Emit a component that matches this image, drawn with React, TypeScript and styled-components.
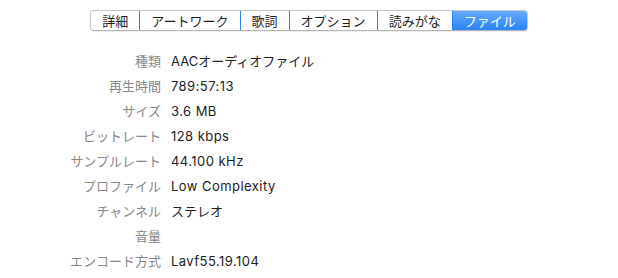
import React from 'react';
import styled, { createGlobalStyle } from 'styled-components';

const GlobalStyle = createGlobalStyle`
  html, body {
    margin: 0;
    padding: 0;
    background: #ffffff;
  }
  body {
    font-family: Inter, "Noto Sans CJK JP", sans-serif;
    -webkit-font-smoothing: antialiased;
  }
`;

const Page = styled.div`
  width: 618px;
  height: 278px;
  padding-top: 10px;
  box-sizing: border-box;
`;

const TabBar = styled.div`
  display: flex;
  justify-content: center;
`;

const Segments = styled.div`
  display: flex;
  height: 21px;
  box-sizing: border-box;
  border: 1px solid #c6c6c6;
  border-bottom-color: #b4b4b4;
  border-radius: 4px;
  background: #ffffff;
  box-shadow: 0 0.5px 1px rgba(0, 0, 0, 0.08);
  overflow: hidden;
`;

const Segment = styled.div<{ $active?: boolean }>`
  display: flex;
  align-items: center;
  justify-content: center;
  padding: 0 11px;
  font-family: "Noto Sans CJK JP", sans-serif;
  font-size: 13px;
  line-height: 1;
  color: ${(p) => (p.$active ? '#ffffff' : '#1e1e1e')};
  background: ${(p) =>
    p.$active ? 'linear-gradient(#63aafc, #2a82f6)' : 'transparent'};
  & + & {
    border-left: 1px solid ${(p) => (p.$active ? '#2a82f6' : '#d6d6d6')};
  }
`;

const InfoGrid = styled.div`
  display: grid;
  grid-template-columns: 161px auto;
  column-gap: 10px;
  grid-auto-rows: 25px;
  margin-top: 17px;
  align-items: center;
`;

const Label = styled.div`
  text-align: right;
  font-family: "Noto Sans CJK JP", sans-serif;
  font-size: 13px;
  color: #878787;
  white-space: nowrap;
`;

const Value = styled.div<{ $latin?: boolean }>`
  font-family: Inter, "Noto Sans CJK JP", sans-serif;
  font-size: 13px;
  letter-spacing: ${(p) => (p.$latin ? '0.45px' : '0')};
  color: #222222;
  white-space: nowrap;
`;

const tabs = ['詳細', 'アートワーク', '歌詞', 'オプション', '読みがな', 'ファイル'];

const rows: [string, string][] = [
  ['種類', 'AACオーディオファイル'],
  ['再生時間', '789:57:13'],
  ['サイズ', '3.6 MB'],
  ['ビットレート', '128 kbps'],
  ['サンプルレート', '44.100 kHz'],
  ['プロファイル', 'Low Complexity'],
  ['チャンネル', 'ステレオ'],
  ['音量', ''],
  ['エンコード方式', 'Lavf55.19.104'],
];

const isLatin = (s: string) => /^[\x20-\x7e]*$/.test(s);

export default function App() {
  return (
    <>
      <GlobalStyle />
      <Page>
        <TabBar>
          <Segments>
            {tabs.map((t) => (
              <Segment key={t} $active={t === 'ファイル'}>
                {t}
              </Segment>
            ))}
          </Segments>
        </TabBar>
        <InfoGrid>
          {rows.map(([label, value]) => (
            <React.Fragment key={label}>
              <Label>{label}</Label>
              <Value $latin={isLatin(value)}>{value}</Value>
            </React.Fragment>
          ))}
        </InfoGrid>
      </Page>
    </>
  );
}
